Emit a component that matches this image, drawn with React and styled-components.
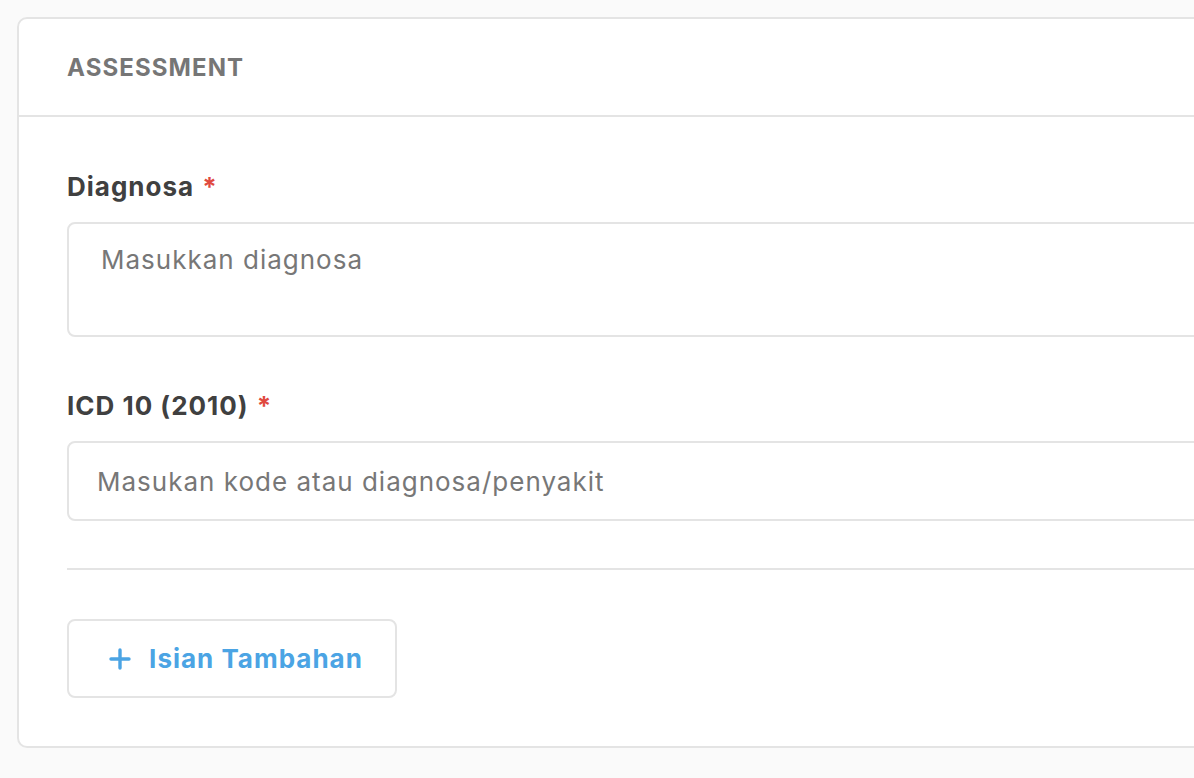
import React from "react";
import styled, { createGlobalStyle } from "styled-components";

const GlobalStyle = createGlobalStyle`
  html, body {
    margin: 0;
    background: #fafafa;
    font-family: Inter, "Noto Sans", sans-serif;
    overflow: hidden;
  }
`;

const Page = styled.div`
  padding: 17px 0 30px 17px;
  min-height: 778px;
  box-sizing: border-box;
`;

const Card = styled.section`
  width: 1260px;
  background: #fff;
  border: 2px solid #e4e4e4;
  border-radius: 10px;
  box-sizing: border-box;
`;

const CardHeader = styled.header`
  height: 98px;
  display: flex;
  align-items: center;
  padding: 0 48px;
  border-bottom: 2px solid #e4e4e4;
  box-sizing: border-box;
`;

const Title = styled.h2`
  margin: 0;
  font-size: 24px;
  font-weight: 700;
  letter-spacing: 1.1px;
  color: #767676;
`;

const Body = styled.div`
  padding: 55px 48px 48px;
  display: flex;
  flex-direction: column;
`;

const Field = styled.div`
  display: flex;
  flex-direction: column;
  gap: 20px;
  margin-bottom: ${(p) => p.gap || 0}px;
`;

const Label = styled.label`
  font-size: 26px;
  font-weight: 700;
  letter-spacing: 1px;
  color: #404040;
  line-height: 30px;
`;

const Required = styled.span`
  color: #e04a3f;
  margin-left: 8px;
`;

const TextArea = styled.textarea`
  height: 115px;
  box-sizing: border-box;
  border: 2px solid #e4e4e4;
  border-radius: 8px;
  padding: 19px 32px;
  font-family: inherit;
  font-size: 26px;
  letter-spacing: 1px;
  line-height: 34px;
  resize: none;
  outline: none;
  &::placeholder {
    color: #777;
  }
`;

const Input = styled.input`
  height: 80px;
  box-sizing: border-box;
  border: 2px solid #e4e4e4;
  border-radius: 8px;
  padding: 0 28px;
  font-family: inherit;
  font-size: 26px;
  letter-spacing: 1px;
  outline: none;
  &::placeholder {
    color: #777;
  }
`;

const Divider = styled.hr`
  margin: 47px 0 49px;
  border: 0;
  border-top: 2px solid #e4e4e4;
`;

const AddButton = styled.button`
  align-self: flex-start;
  width: 330px;
  height: 79px;
  display: flex;
  align-items: center;
  justify-content: center;
  gap: 18px;
  padding: 0 0 0 8px;
  background: #fff;
  border: 2px solid #e4e4e4;
  border-radius: 8px;
  font-family: inherit;
  font-size: 26px;
  font-weight: 700;
  letter-spacing: 1px;
  color: #4ba4e4;
  cursor: pointer;
`;

const PlusIcon = () => (
  <svg width="22" height="22" viewBox="0 0 22 22">
    <path d="M11 2v18M2 11h18" stroke="#4ba4e4" strokeWidth="3.4" strokeLinecap="round" />
  </svg>
);

export default function App() {
  return (
    <Page>
      <GlobalStyle />
      <Card>
        <CardHeader>
          <Title>ASSESSMENT</Title>
        </CardHeader>
        <Body>
          <Field gap={54}>
            <Label>
              Diagnosa<Required>*</Required>
            </Label>
            <TextArea placeholder="Masukkan diagnosa" />
          </Field>
          <Field>
            <Label>
              ICD 10 (2010)<Required>*</Required>
            </Label>
            <Input placeholder="Masukan kode atau diagnosa/penyakit" />
          </Field>
          <Divider />
          <AddButton>
            <PlusIcon />
            Isian Tambahan
          </AddButton>
        </Body>
      </Card>
    </Page>
  );
}
